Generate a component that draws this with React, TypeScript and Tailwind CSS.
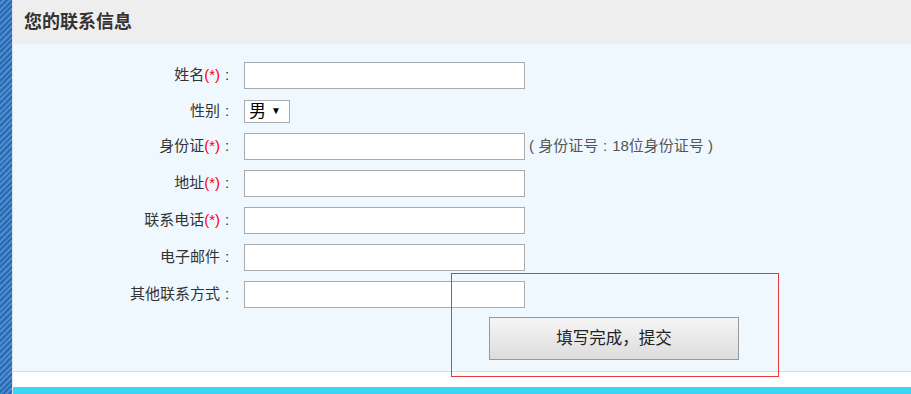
import React from 'react';

const font = { fontFamily: '"Liberation Sans", "Noto Sans CJK SC", sans-serif' };

interface Field {
  label: string;
  required?: boolean;
  hint?: boolean;
}

const fieldsTop: Field[] = [{ label: '姓名', required: true }];

const fieldsBottom: Field[] = [
  { label: '身份证', required: true, hint: true },
  { label: '地址', required: true },
  { label: '联系电话', required: true },
  { label: '电子邮件' },
  { label: '其他联系方式' },
];

const Colon = () => <span className="inline-block w-[14px] text-center">:</span>;

const Label: React.FC<{ field: Field }> = ({ field }) => (
  <div className="w-[231px] shrink-0 text-right text-[15px] text-[#333] pr-[10px]">
    {field.label}
    {field.required && <span className="text-[#ff0000]">(*)</span>}
    <Colon />
  </div>
);

const InputRow: React.FC<{ field: Field }> = ({ field }) => (
  <div className="flex items-center h-[37px]">
    <Label field={field} />
    <input
      type="text"
      className="w-[281px] h-[27px] border border-[#aaaaaa] bg-white outline-none"
    />
    {field.hint && (
      <span className="ml-[4px] text-[15px] text-[#555] whitespace-pre">
        ( 身份证号<Colon />18位身份证号 )
      </span>
    )}
  </div>
);

export default function App() {
  return (
    <div className="flex w-[911px] h-[394px] overflow-hidden bg-white" style={font}>
      {/* striped side bar */}
      <div className="w-[12px] shrink-0 bg-[repeating-linear-gradient(135deg,#2c6ab0_0px,#2c6ab0_2px,#4a8bd2_2px,#4a8bd2_4px)]" />

      <div className="flex-1 flex flex-col border-l border-[#dfe4ea] relative">
        <div className="h-[44px] shrink-0 bg-[#eeeeee] flex items-center pl-[11px]">
          <h2 className="text-[18px] font-bold text-[#333]">您的联系信息</h2>
        </div>

        <div className="h-[328px] shrink-0 bg-[#f0f8ff] border-b border-[#dddddd] pt-[13px]">
          {fieldsTop.map((f) => (
            <InputRow key={f.label} field={f} />
          ))}
          <div className="flex items-center h-[34px]">
            <Label field={{ label: '性别' }} />
            <div className="w-[46px] h-[23px] border border-[#aaaaaa] bg-white flex items-center pl-[4px] gap-[5px]">
              <span className="text-[17px] text-black leading-none">男</span>
              <span className="text-[10px] text-black leading-none">▼</span>
            </div>
          </div>
          {fieldsBottom.map((f) => (
            <InputRow key={f.label} field={f} />
          ))}
          <div className="pt-[4px] pl-[476px]">
            <button className="w-[250px] h-[43px] border border-[#999999] bg-[linear-gradient(#f6f6f6,#dcdcdc)] text-[16.5px] text-[#222]">
              填写完成，提交
            </button>
          </div>
        </div>

        <div className="h-[15px] shrink-0 bg-white" />
        <div className="h-[7px] shrink-0 bg-[#3cd6f2]" />

        {/* annotation box */}
        <div className="absolute left-[438px] top-[273px] w-[328px] h-[104px] border border-[#e53a3a] pointer-events-none" />
      </div>
    </div>
  );
}
